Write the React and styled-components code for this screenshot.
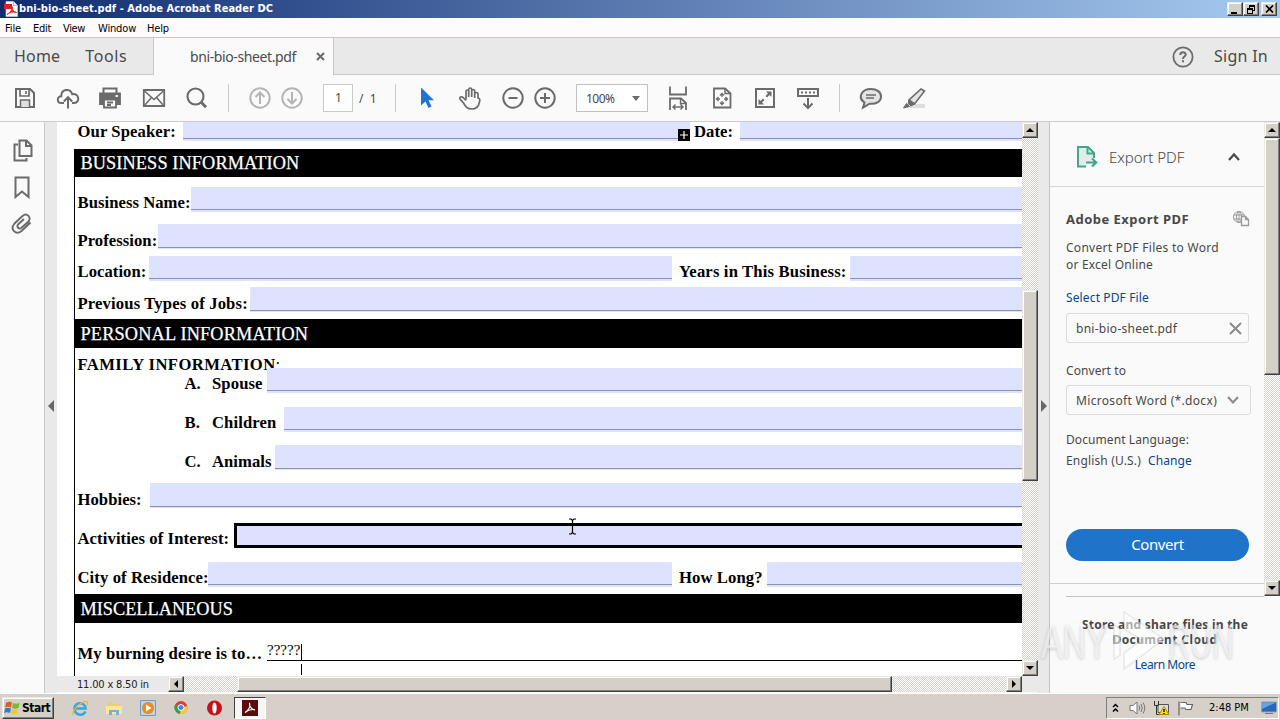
import React from 'react';
import styled, { createGlobalStyle, css } from 'styled-components';

const GlobalStyle = createGlobalStyle`
    * {
        box-sizing: border-box;
    }

    body {
        margin: 0;
        overflow: hidden;
        background: #fafafa;
    }

    svg {
        display: block;
        flex: none;
    }
`

const tahoma = css`
    font-family: 'DejaVu Sans Condensed', 'DejaVu Sans', sans-serif;
`

const dither = css`
    background: repeating-conic-gradient(#d4d0c8 0% 25%, #ffffff 0% 50%) 0 0 / 2px 2px;
`

const bevel = css`
    border: 1px solid;
    border-color: #ece9e2 #404040 #404040 #ece9e2;
    box-shadow: inset -1px -1px 0 #808080, inset 1px 1px 0 #ffffff;
    background: #d4d0c8;
`

const Screen = styled.div`
    position: relative;
    display: flex;
    flex-direction: column;
    width: 1280px;
    height: 720px;
    overflow: hidden;
    background: #fafafa;
    font-family: 'Noto Sans', 'Open Sans', sans-serif;
    color: #484848;
    white-space: nowrap;
`

const Text = styled.span`
    font-size: ${p => p.$size || 12}px;
    letter-spacing: ${p => p.$ls || 0}px;
    font-weight: ${p => p.$weight || 400};
    color: ${p => p.$color || 'inherit'};
    line-height: ${p => p.$lh || 17}px;
`

/* ---------- window chrome ---------- */

const TitleBar = styled.div`
    ${tahoma}
    display: flex;
    align-items: center;
    flex: none;
    height: 18px;
    padding: 0 3px 0 4px;
    gap: 1px;
    background: linear-gradient(to right, #0f2b70, #a6caf0);
`

const WindowTitle = styled.span`
    flex: 1;
    font-size: 11px;
    font-weight: bold;
    letter-spacing: 0.05px;
    line-height: 18px;
    color: #ffffff;
`

const WindowButton = styled.span`
    ${bevel}
    display: flex;
    align-items: center;
    justify-content: center;
    width: 16px;
    height: 14px;
    margin-left: ${p => p.$gap || 0}px;
`

const MenuBar = styled.div`
    ${tahoma}
    display: flex;
    flex: none;
    height: 20px;
    padding-left: 5px;
    background: #fdfbfc;
    border-bottom: 1px solid #c9c9c9;
`

const MenuItem = styled.span`
    width: ${p => p.$width}px;
    font-size: 11px;
    letter-spacing: ${p => p.$ls}px;
    line-height: 21px;
    color: #000000;
`

const TabBar = styled.div`
    display: flex;
    flex: none;
    height: 37px;
    color: #4a4a4a;
`

const TabHomes = styled.div`
    display: flex;
    align-items: center;
    width: 154px;
    padding: 1px 0 0 14px;
    gap: 25px;
    background: #e9e9e9;
    border-right: 1px solid #c9c9c9;
    border-bottom: 1px solid #c9c9c9;
`

const ActiveTab = styled.div`
    display: flex;
    align-items: center;
    justify-content: space-between;
    width: 179px;
    padding: 0 8px 0 36px;
    background: #fafafa;
`

const TabRest = styled.div`
    display: flex;
    flex: 1;
    align-items: center;
    justify-content: flex-end;
    gap: 20px;
    padding: 1px 12px 0 0;
    background: #e9e9e9;
    border-left: 1px solid #c9c9c9;
    border-bottom: 1px solid #c9c9c9;
`

const Toolbar = styled.div`
    display: flex;
    align-items: center;
    flex: none;
    height: 47px;
    padding: 0 0 0 13px;
    background: #fafafa;
    border-bottom: 1px solid #cccccc;
`

const Tool = styled.span`
    flex: none;
    width: 24px;
    margin-right: ${p => p.$after}px;
`

const Divider = styled.span`
    width: 1px;
    height: 28px;
    margin-right: ${p => p.$after}px;
    background: #c9c9c9;
`

const PageBox = styled.span`
    width: 30px;
    height: 28px;
    margin-right: 6px;
    padding-left: 11px;
    border: 1px solid #c9c9c9;
    background: #ffffff;
    font-size: 12px;
    line-height: 26px;
`

const PageTotal = styled.span`
    width: 36px;
    font-size: 12px;
    letter-spacing: 1.6px;
`

const ZoomBox = styled.span`
    display: flex;
    align-items: center;
    justify-content: space-between;
    width: 72px;
    height: 28px;
    margin-right: 18px;
    padding: 0 7px 0 9px;
    border: 1px solid #c0c0c0;
    background: #ffffff;
`

/* ---------- document ---------- */

const Body = styled.div`
    display: flex;
    flex: none;
    height: 571px;
`

const Rail = styled.div`
    display: flex;
    flex-direction: column;
    width: 45px;
    padding: 16px 0 0 10px;
    gap: 12.5px;
    border-right: 1px solid #c9c9c9;
`

const Splitter = styled.div`
    display: flex;
    align-items: center;
    justify-content: center;
    width: ${p => p.$width}px;
    background: #e9e9e9;
    padding-bottom: 3px;
`

const Viewer = styled.div`
    display: flex;
    flex-direction: column;
    width: 981px;
`

const Pane = styled.div`
    display: flex;
    height: 554px;
`

const Page = styled.div`
    display: flex;
    flex-direction: column;
    width: 965px;
    padding-left: 17px;
    overflow: hidden;
    background: #ffffff;
    font-family: 'Liberation Serif', serif;
    color: #000000;
`

const Frame = styled.div`
    display: flex;
    flex-direction: column;
    flex: 1;
    margin-top: 8px;
    border-left: 1px solid #000000;
`

const Band = styled.div`
    flex: none;
    height: ${p => p.$height}px;
    margin-top: ${p => p.$top || 0}px;
    padding-left: 5.5px;
    background: #000000;
    color: #ffffff;
    font-size: 18.3px;
    letter-spacing: ${p => p.$ls || 0}px;
    line-height: ${p => (p.$height > 28 ? 31 : 28)}px;
    -webkit-text-stroke: 0.25px #ffffff;
`

const FormRow = styled.div`
    display: flex;
    flex: none;
    height: 25px;
    margin-top: ${p => p.$top}px;
    padding-left: ${p => p.$indent || 2.5}px;
`

const Label = styled.span`
    flex: none;
    width: ${p => p.$width}px;
    font-size: 16.65px;
    font-weight: bold;
    letter-spacing: ${p => p.$ls || 0.05}px;
    line-height: ${p => p.$lh || 31}px;
`

const Colon = styled.span`
    font-weight: normal;
`

const Field = styled.span`
    flex: ${p => (p.$width ? 'none' : 1)};
    width: ${p => (p.$width ? p.$width + 'px' : 'auto')};
    height: 25px;
    margin-right: ${p => p.$after || 0}px;
    background: linear-gradient(#8c91ac, #8c91ac) 0 ${p => p.$line || 22}px / 100% 1px no-repeat #dde3ff;
`

const FocusedField = styled.span`
    flex: 1;
    height: 25px;
    border: 3px solid #000000;
    border-right: 0;
    background: #dde1ff;
`

const TypedField = styled.span`
    position: relative;
    flex: 1;
    height: 25px;
    border-bottom: 1px solid #000000;
    font-size: 15px;
    line-height: 29px;
`

const Caret = styled.span`
    position: absolute;
    left: 34px;
    top: 8px;
    width: 1px;
    height: 31px;
    background: linear-gradient(#000 0 16px, transparent 16px 20px, #000 20px);
`

const MoreBadge = styled.span`
    position: absolute;
    left: 678px;
    top: 129px;
    width: 12px;
    height: 12px;
    display: flex;
    align-items: center;
    justify-content: center;
    background: #000000;
`

const TextCursor = styled.span`
    position: absolute;
    left: 568px;
    top: 518px;
`

const ScrollBar = styled.div`
    ${dither}
    display: flex;
    flex: none;
    flex-direction: ${p => (p.$row ? 'row' : 'column')};
    width: ${p => (p.$row ? '854px' : '16px')};
    height: ${p => p.$height}px;
`

const ScrollButton = styled.span`
    ${bevel}
    display: flex;
    flex: none;
    align-items: center;
    justify-content: center;
    width: 16px;
    height: 16px;
`

const Thumb = styled.span`
    ${bevel}
    flex: none;
    width: ${p => p.$width || 16}px;
    height: ${p => p.$height || 16}px;
    margin: ${p => p.$margin};
`

const Track = styled.span`
    flex: 1;
`

const StatusRow = styled.div`
    display: flex;
    height: 16px;
    background: #e9e9e9;
`

const PageSize = styled.span`
    ${tahoma}
    width: 111px;
    padding-left: 20px;
    font-size: 11px;
    letter-spacing: -0.18px;
    line-height: 18px;
    color: #222222;
`

/* ---------- export panel ---------- */

const Side = styled.div`
    display: flex;
    flex-direction: column;
    width: 231px;
    background: #fafafa;
    border-left: 1px solid #c4c4c4;
`

const SideTop = styled.div`
    display: flex;
    height: 474px;
`

const Panel = styled.div`
    display: flex;
    flex-direction: column;
    flex: 1;
`

const PanelHeader = styled.div`
    display: flex;
    align-items: center;
    flex: none;
    height: 65px;
    padding: 6px 23px 0 25px;
    border-bottom: 1px solid #d5d5d5;
`

const PanelTitle = styled.span`
    flex: 1;
    margin-left: 10px;
    font-size: 15px;
    font-weight: 300;
    letter-spacing: -0.05px;
    color: #484848;
`

const PanelBody = styled.div`
    display: flex;
    flex-direction: column;
    height: 397px;
    padding: 23px 0 0 16px;
    border-bottom: 1px solid #cfcfcf;
`

const HeadingRow = styled.div`
    display: flex;
    align-items: center;
    justify-content: space-between;
    height: 18px;
    margin-bottom: 11px;
    padding-right: 14px;
`

const PanelLink = styled.a`
    margin-top: 16px;
    font-size: 12px;
    letter-spacing: 0.13px;
    line-height: 17px;
    color: #05478f;
`

const Box = styled.div`
    display: flex;
    align-items: center;
    justify-content: space-between;
    flex: none;
    width: ${p => p.$width}px;
    height: 30px;
    margin: ${p => p.$margin};
    padding: 0 ${p => p.$right}px 0 9px;
    border: 1px solid #dcdcdc;
    border-radius: 3px;
`

const LanguageRow = styled.div`
    display: flex;
    gap: 7px;
    margin-top: 4px;
`

const ConvertButton = styled.div`
    width: 183px;
    height: 32px;
    margin-top: 60px;
    border-radius: 16px;
    background: #1f74ca;
    color: #ffffff;
    text-align: center;
    font-size: 15px;
    letter-spacing: -0.4px;
    line-height: 31px;
`

const CloudNote = styled.div`
    display: flex;
    flex-direction: column;
    align-items: center;
    width: 198px;
    margin-left: 16px;
    padding: 20px 0 0;
    border-top: 1px solid #c4c4c4;
`

const LearnMore = styled.a`
    margin-top: 9px;
    font-size: 12px;
    letter-spacing: -0.45px;
    line-height: 17px;
    color: #05478f;
`

/* ---------- taskbar ---------- */

const Taskbar = styled.div`
    ${tahoma}
    display: flex;
    flex: none;
    align-items: center;
    height: 27px;
    padding: 1px 1px 0 2px;
    background: #d6d0c8;
    border-top: 1px solid #ffffff;
`

const StartButton = styled.span`
    ${bevel}
    display: flex;
    align-items: center;
    width: 52px;
    height: 22px;
    margin-right: 17px;
    padding-left: 1px;
    gap: 1px;
    font-size: 12px;
    font-weight: bold;
    letter-spacing: -0.5px;
    color: #000000;
`

const Launch = styled.span`
    width: 18px;
    margin-right: ${p => p.$after}px;
`

const RunningApp = styled.span`
    display: flex;
    align-items: center;
    justify-content: center;
    width: 32px;
    height: 22px;
    border: 1px solid;
    border-color: #404040 #ffffff #ffffff #404040;
    background: #f8f6f4;
`

const Tray = styled.span`
    display: flex;
    align-items: center;
    width: 173px;
    height: 22px;
    margin-left: auto;
    padding-left: 5px;
    border: 1px solid;
    border-color: #808080 #ffffff #ffffff #808080;
`

const TrayItem = styled.span`
    margin-right: ${p => p.$after}px;
`

const Clock = styled.span`
    width: 52px;
    font-size: 11px;
    color: #000000;
`

const Watermark = styled.div`
    position: absolute;
    left: 1041px;
    top: 607px;
    display: flex;
    align-items: center;
    width: 196px;
    height: 68px;
    font: 49px/68px 'Liberation Sans', sans-serif;
    color: rgba(255, 255, 255, 0.6);
    text-shadow: 0 1px 4px rgba(0, 0, 0, 0.2);
`

const MarkWord = styled.span`
    flex: none;
    width: ${p => p.$width}px;
    transform: scaleX(${p => p.$squeeze});
    transform-origin: 0 50%;
`

const stroke = { fill: 'none', stroke: '#6b6b6b', strokeWidth: 1.8 }

function Icon({ size = 24, children, ...rest }) {
    return <svg width={size} height={size} viewBox={`0 0 ${size} ${size}`} {...stroke} {...rest}>{children}</svg>
}

function Arrow({ dir, size = 4, color = '#000' }) {
    const turn = { up: 0, right: 90, down: 180, left: 270 }[dir]
    return (
        <svg width={size * 2} height={size * 2} viewBox="0 0 8 8">
            <path d="M0 6L4 2L8 6Z" fill={color} transform={`rotate(${turn} 4 4)`} />
        </svg>
    )
}

function Chrome() {
    return (
        <>
            <TitleBar>
                <svg width="14" height="16" viewBox="0 0 14 16">
                    <path d="M2 .5H9.5L13.500 4.500V15.500H2Z" fill="#fff" stroke="#ccc" strokeWidth=".7" />
                    <path d="M9.500 .5V4.500H13.500" fill="#eee" stroke="#999" strokeWidth=".6" />
                    <path d="M-2 3H8V8H-2Z" fill="#d8241c" />
                    <path d="M3 13.500C7 11 8.500 8 8 5.500C8 9 10 11 12.500 11.500C9 10.500 6 11 3 13.500Z" fill="#e33" stroke="#d8241c" />
                </svg>
                <WindowTitle>bni-bio-sheet.pdf - Adobe Acrobat Reader DC</WindowTitle>
                <WindowButton>
                    <svg width="10" height="9" viewBox="0 0 10 9"><path d="M1 7H7V9H1Z" fill="#000" /></svg>
                </WindowButton>
                <WindowButton $gap={-1}>
                    <svg width="10" height="9" viewBox="0 0 10 9" fill="none" stroke="#000" shapeRendering="crispEdges">
                        <path d="M3.5 3V.5H8.5V5.5H7M3 1.5H9M1.5 3.5H6.5V8.5H1.5ZM1 4.5H7" />
                    </svg>
                </WindowButton>
                <WindowButton $gap={1}>
                    <svg width="9" height="8" viewBox="0 0 9 8"><path d="M1 .5L8 7.5M8 .5L1 7.5" stroke="#000" strokeWidth="1.7" /></svg>
                </WindowButton>
            </TitleBar>
            <MenuBar>
                <MenuItem $width={28} $ls={-0.1}>File</MenuItem>
                <MenuItem $width={30} $ls={-0.25}>Edit</MenuItem>
                <MenuItem $width={35} $ls={-0.35}>View</MenuItem>
                <MenuItem $width={49} $ls={-0.15}>Window</MenuItem>
                <MenuItem $width={40} $ls={-0.2}>Help</MenuItem>
            </MenuBar>
            <TabBar>
                <TabHomes>
                    <Text $size={16} $ls={0.2}>Home</Text>
                    <Text $size={16} $ls={0.6}>Tools</Text>
                </TabHomes>
                <ActiveTab>
                    <Text $size={14} $ls={-0.39}>bni-bio-sheet.pdf</Text>
                    <svg width="9" height="9" viewBox="0 0 9 9"><path d="M1 1L8 8M8 1L1 8" stroke="#6b6b6b" strokeWidth="2" /></svg>
                </ActiveTab>
                <TabRest>
                    <Icon size={22}>
                        <circle cx="11" cy="11" r="9.6" />
                        <path d="M8.3 9C8.3 5.4 13.8 5.5 13.7 8.7C13.6 10.6 11 10.6 11 13M11 14.3V16.2" strokeWidth="2" />
                    </Icon>
                    <Text $size={16} $ls={0.27}>Sign In</Text>
                </TabRest>
            </TabBar>
        </>
    )
}

function Tools() {
    return (
        <Toolbar>
            <Tool $after={19}>
                <Icon strokeWidth="2">
                    <path d="M3 3H17L21 7V21H3Z" />
                    <path d="M7 3V10H16V3M13 5V8" strokeWidth="1.700" />
                    <path d="M7.5 21V14H16.5V21" fill="#e0e0e0" strokeWidth="1.500" />
                </Icon>
            </Tool>
            <Tool $after={18}>
                <Icon strokeWidth="2">
                    <path d="M8 17H5.5C.6 17 .6 10.3 5.3 10.3C5 3.2 14.5 1.5 16.2 8.2C23.8 7 24 17 18.3 17H16" />
                    <path d="M12 22.5V11.5M7.8 15.5L12 11.2L16.2 15.5" />
                </Icon>
            </Tool>
            <Tool $after={20}>
                <Icon>
                    <path d="M5.5 7V2.5H18.500V7" strokeWidth="2" />
                    <path d="M2 7.500H22V18H19V14H5V18H2Z" fill="#6b6b6b" />
                    <path d="M6 13.500H18V21.500H6ZM9 16.500H15M9 19H13" fill="#fafafa" />
                    <path d="M17.500 10H20" stroke="#fff" />
                </Icon>
            </Tool>
            <Tool $after={19}>
                <Icon>
                    <path d="M1.800 4H22.200V20H1.800Z" />
                    <path d="M2.500 5L12 13.500L21.500 5M2.500 19.500L9.500 11.500M21.500 19.500L14.500 11.500" strokeWidth="1.500" />
                </Icon>
            </Tool>
            <Tool $after={19}>
                <Icon>
                    <circle cx="10.500" cy="10.500" r="8" strokeWidth="2.100" />
                    <path d="M16.500 16.500L21 21.300" strokeWidth="2.800" />
                </Icon>
            </Tool>
            <Divider $after={19} />
            <Tool $after={8}>
                <Icon stroke="#b4b4b4" strokeWidth="2">
                    <circle cx="12" cy="12" r="9.700" />
                    <path d="M12 18V7M7.500 11L12 6.500L16.500 11" />
                </Icon>
            </Tool>
            <Tool $after={19}>
                <Icon stroke="#b4b4b4" strokeWidth="2">
                    <circle cx="12" cy="12" r="9.700" />
                    <path d="M12 6V17M7.500 13L12 17.500L16.500 13" />
                </Icon>
            </Tool>
            <PageBox>1</PageBox>
            <PageTotal>/ 1</PageTotal>
            <Divider $after={19} />
            <Tool $after={19}>
                <Icon><path d="M6 1.500L19 14.300H13.500L16.500 20.500L13.500 22L10.500 15.500L6 19.500Z" fill="#1f74d2" stroke="none" /></Icon>
            </Tool>
            <Tool $after={19}>
                <Icon strokeWidth="1.700">
                    <path d="M8 13.500V5.500C8 3.500 10.700 3.500 10.700 5.500V11V3.500C10.700 1.500 13.700 1.500 13.700 3.500V11V5C13.700 3 16.700 3 16.700 5V12V8C16.900 6 20 6 20 8V12C22 12 22 14 21.500 16C20.500 21 18.500 23 14 23C9 23 7.500 20.500 5.500 17L2 13C1 10.800 3.500 10.300 5 11.500L8 14.500" />
                </Icon>
            </Tool>
            <Tool $after={8}>
                <Icon strokeWidth="2"><circle cx="12" cy="12" r="9.700" /><path d="M7.500 12H16.500" /></Icon>
            </Tool>
            <Tool $after={19}>
                <Icon strokeWidth="2"><circle cx="12" cy="12" r="9.700" /><path d="M7 12H17M12 7V17" /></Icon>
            </Tool>
            <ZoomBox>
                <Text $size={12} $ls={-0.55}>100%</Text>
                <svg width="8" height="5" viewBox="0 0 8 5"><path d="M0 0H8L4 5Z" fill="#6b6b6b" /></svg>
            </ZoomBox>
            <Tool $after={20}>
                <Icon>
                    <path d="M4 .5V8.500H20V.500M4 24V12.500H15L20 17V24" />
                    <path d="M14.500 12.500V17.500H20M7 21H17M9.500 18.500L7 21L9.500 23.500M14.500 18.500L17 21L14.500 23.500" strokeWidth="1.400" />
                </Icon>
            </Tool>
            <Tool $after={19}>
                <Icon>
                    <path d="M4 2.500H15L20.500 7.500V21.500H4Z" />
                    <path d="M15 3V7.500H20" strokeWidth="1.500" />
                    <path d="M12 8V11M12 15V18M6.500 13H10M14 13H17.500M10 9.500L12 7.500L14 9.500M10 16.500L12 18.500L14 16.500M8.500 11L6.500 13L8.500 15M15.500 11L17.500 13L15.500 15" strokeWidth="1.300" />
                </Icon>
            </Tool>
            <Tool $after={19}>
                <Icon>
                    <path d="M3 3H21V21H3Z" strokeWidth="2" />
                    <path d="M13 5.500H18.500V11L16.500 9L14 11.500L12.500 10L15 7.500ZM5.500 13V18.500H11L9 16.500L11.500 14L10 12.500L7.500 15Z" fill="#6b6b6b" stroke="none" />
                </Icon>
            </Tool>
            <Tool $after={19}>
                <Icon>
                    <path d="M2 3H22V10H2Z" strokeWidth="2" />
                    <path d="M5 6.500H20" strokeDasharray="2 2" />
                    <path d="M12 12V21.500M7.500 17.500L12 22L16.500 17.500" strokeWidth="2" />
                </Icon>
            </Tool>
            <Divider $after={19} />
            <Tool $after={19}>
                <Icon strokeWidth="2">
                    <path d="M12 3C18 3 22 6.200 22 10.500C22 16 16.500 18.500 10.500 17.700L4 21.500L5.500 16.500C-1.500 12 2 3 12 3Z" fill="#e4e4e4" />
                    <path d="M7 9H17M7 12H15" strokeWidth="1.500" />
                </Icon>
            </Tool>
            <Tool $after={0}>
                <Icon>
                    <path d="M10 18H23V22H7Z" fill="#dedede" stroke="none" />
                    <path d="M19 3L22.500 5L12.500 18L7 14Z" fill="#e4e4e4" strokeWidth="1.600" />
                    <path d="M7 14L12.500 18L9 20L6 17.500ZM4.500 17.500L7.500 20.500L1.500 22Z" fill="#6b6b6b" strokeWidth="1" />
                </Icon>
            </Tool>
        </Toolbar>
    )
}

function Form() {
    return (
        <Page>
            <FormRow $top={-6} $indent={3.5}>
                <Label $width={105.5} $ls={0.1}>Our Speaker:</Label>
                <Field $width={507} $after={4} />
                <Label $width={46}>Date:</Label>
                <Field />
            </FormRow>
            <Frame>
                <Band $height={28} $ls={0.1}>BUSINESS INFORMATION</Band>
                <FormRow $top={10}>
                    <Label $width={113.5}>Business Name:</Label>
                    <Field />
                </FormRow>
                <FormRow $top={12}>
                    <Label $width={80.5} $lh={33}>Profession:</Label>
                    <Field $line={23} />
                </FormRow>
                <FormRow $top={7}>
                    <Label $width={71.5} $lh={32}>Location:</Label>
                    <Field $width={523} $after={7} />
                    <Label $width={171} $lh={32} $ls={0.16}>Years in This Business:</Label>
                    <Field />
                </FormRow>
                <FormRow $top={6}>
                    <Label $width={172.5} $lh={33} $ls={0.15}>Previous Types of Jobs:</Label>
                    <Field $line={23} />
                </FormRow>
                <Band $height={29} $top={7} $ls={0.17}>PERSONAL INFORMATION</Band>
                <FormRow $top={6}>
                    <Label $width={205} $lh={21} $ls={0.4}>FAMILY INFORMATION<Colon>:</Colon></Label>
                </FormRow>
                <FormRow $top={-11} $indent={109.5}>
                    <Label $width={27.5}>A.</Label>
                    <Label $width={55} $ls={0.1}>Spouse</Label>
                    <Field />
                </FormRow>
                <FormRow $top={14} $indent={109.5}>
                    <Label $width={27.5}>B.</Label>
                    <Label $width={72} $ls={0.1}>Children</Label>
                    <Field />
                </FormRow>
                <FormRow $top={13} $indent={109.5}>
                    <Label $width={27.5} $lh={33}>C.</Label>
                    <Label $width={63} $lh={33}>Animals</Label>
                    <Field $line={23} />
                </FormRow>
                <FormRow $top={13}>
                    <Label $width={72.5} $lh={33}>Hobbies:</Label>
                    <Field $line={23} />
                </FormRow>
                <FormRow $top={15}>
                    <Label $width={156.5} $ls={0.1}>Activities of Interest:</Label>
                    <FocusedField />
                </FormRow>
                <FormRow $top={14}>
                    <Label $width={130.5} $ls={0.1}>City of Residence:</Label>
                    <Field $width={464} $after={7} />
                    <Label $width={88} $ls={0.1}>How Long?</Label>
                    <Field />
                </FormRow>
                <Band $height={29} $top={7}>MISCELLANEOUS</Band>
                <FormRow $top={13}>
                    <Label $width={189.5} $lh={35} $ls={0.12}>My burning desire is to…</Label>
                    <TypedField>?????<Caret /></TypedField>
                </FormRow>
            </Frame>
        </Page>
    )
}

function ExportPanel() {
    return (
        <Side>
            <SideTop>
                <Panel>
                    <PanelHeader>
                        <Icon stroke="#3fa88a" strokeWidth="2">
                            <path d="M11 21.500H3V2H13L19 8V13" fill="#e3ece9" />
                            <path d="M12.500 2V8.500H19" />
                            <path d="M11 17.500H20M17 13.500L21.200 17.500L17 21.500" strokeWidth="2.200" />
                        </Icon>
                        <PanelTitle>Export PDF</PanelTitle>
                        <svg width="14" height="10" viewBox="0 0 14 10"><path d="M2 8L7 2.500L12 8" fill="none" stroke="#4a4a4a" strokeWidth="2.200" /></svg>
                    </PanelHeader>
                    <PanelBody>
                        <HeadingRow>
                            <Text $size={13} $weight="bold" $ls={0.48}>Adobe Export PDF</Text>
                            <Icon size={18} stroke="#9a9a9a" strokeWidth="1">
                                <circle cx="7" cy="7" r="5.500" />
                                <ellipse cx="7" cy="7" rx="2.500" ry="5.500" />
                                <path d="M1.500 5H12.500M1.500 9H12.500M7 1.500V12.500" />
                                <path d="M9.500 6.500H13.500L16.500 9.500V15.500H9.500ZM13.500 6.500V9.500H16.500" fill="#fafafa" strokeWidth="1.300" />
                            </Icon>
                        </HeadingRow>
                        <Text $ls={0.28}>Convert PDF Files to Word</Text>
                        <Text $ls={0.2}>or Excel Online</Text>
                        <PanelLink>Select PDF File</PanelLink>
                        <Box $width={183} $right={6} $margin="7px 0 19px">
                            <Text $ls={0.27}>bni-bio-sheet.pdf</Text>
                            <svg width="13" height="13" viewBox="0 0 13 13"><path d="M1 1L12 12M12 1L1 12" stroke="#8a8a8a" strokeWidth="2" /></svg>
                        </Box>
                        <Text $ls={0.09}>Convert to</Text>
                        <Box $width={185} $right={11} $margin="6px 0 16px">
                            <Text $ls={0.33} $lh={19}>Microsoft Word (*.docx)</Text>
                            <svg width="12" height="8" viewBox="0 0 12 8"><path d="M1 1L6 6.500L11 1" fill="none" stroke="#8a8a8a" strokeWidth="2" /></svg>
                        </Box>
                        <Text $ls={0.09}>Document Language:</Text>
                        <LanguageRow>
                            <Text $ls={0.16}>English (U.S.)</Text>
                            <Text $ls={0.12} $color="#05478f">Change</Text>
                        </LanguageRow>
                        <ConvertButton>Convert</ConvertButton>
                    </PanelBody>
                </Panel>
                <ScrollBar $height={474}>
                    <ScrollButton><Arrow dir="up" /></ScrollButton>
                    <Thumb $height={237} $margin="0" />
                    <Track />
                    <ScrollButton><Arrow dir="down" /></ScrollButton>
                </ScrollBar>
            </SideTop>
            <CloudNote>
                <Text $weight="bold" $ls={0.23} $lh={15}>Store and share files in the</Text>
                <Text $weight="bold" $ls={0.4} $lh={15}>Document Cloud</Text>
                <LearnMore>Learn More</LearnMore>
            </CloudNote>
        </Side>
    )
}

function DesktopBar() {
    return (
        <Taskbar>
            <StartButton>
                <svg width="17" height="16" viewBox="0 0 17 16">
                    <path d="M2 3Q5 1 8 2.500L7 7.500Q4 6 1 7.500Z" fill="#e8572a" />
                    <path d="M9 3Q12 4.500 15.500 3L14.500 8Q11 9.500 8 8Z" fill="#7cb82f" />
                    <path d="M1 8.500Q4 7 7 8.500L6 13Q3 11.500 .2 13Z" fill="#2f7fd0" />
                    <path d="M8 9Q11 10.500 14 9L13 13.500Q10 15 7 13.500Z" fill="#f5c52c" />
                </svg>
                Start
            </StartButton>
            <Launch $after={16}>
                <svg width="18" height="18" viewBox="0 0 18 18" fill="none">
                    <path d="M14.500 12.500C11.500 18 3.500 16 3.500 9.500C3.500 3 13.500 2 14.500 9.500H5" stroke="#39a5e0" strokeWidth="2.600" />
                    <path d="M2.500 16C-1 13 11 1 16 2.500C17.500 3 16 6 15.500 6.500" stroke="#e8b832" strokeWidth="1.200" />
                </svg>
            </Launch>
            <Launch $after={16}>
                <svg width="18" height="18" viewBox="0 0 18 18">
                    <path d="M2 3H7L8 5H16V15H2Z" fill="#e9cf72" />
                    <path d="M1 7H17V15H1Z" fill="#f7e7a0" />
                    <path d="M4 16V11H14V16H11V13H7V16Z" fill="#6db4e3" />
                </svg>
            </Launch>
            <Launch $after={16}>
                <svg width="18" height="18" viewBox="0 0 18 18">
                    <path d="M1.500 1.500H16.500V16.500H1.500Z" fill="#b9d5ea" stroke="#6a9fc5" />
                    <circle cx="9" cy="9" r="6" fill="#f08a1d" />
                    <path d="M7 5.500L12.500 9L7 12.500Z" fill="#fff" />
                </svg>
            </Launch>
            <Launch $after={15}>
                <svg width="18" height="18" viewBox="0 0 18 18">
                    <circle cx="8" cy="8.500" r="6.500" fill="#e33b2e" />
                    <path d="M8 8.500L2.400 5.200A6.500 6.500 0 0 0 7 15Z" fill="#2ba24c" />
                    <path d="M8 8.500L14.400 7A6.500 6.500 0 0 1 7 15Z" fill="#f9cc2d" />
                    <circle cx="8" cy="8.500" r="3" fill="#4285e8" stroke="#fff" />
                </svg>
            </Launch>
            <Launch $after={10}>
                <svg width="18" height="18" viewBox="0 0 18 18">
                    <circle cx="8.500" cy="9" r="7.500" fill="#c8101c" />
                    <ellipse cx="8.500" cy="9" rx="2.200" ry="5.500" fill="#fff" />
                </svg>
            </Launch>
            <RunningApp>
                <svg width="16" height="16" viewBox="0 0 16 16">
                    <path d="M0 0H16V16H0Z" fill="#5c0a0c" />
                    <path d="M3 12.500C8 9 8.500 6 7.500 3C7.500 7 10 10 13 9.800C9.500 9 6 10 3 12.500Z" fill="none" stroke="#fff" strokeWidth="1.200" />
                </svg>
            </RunningApp>
            <Tray>
                <TrayItem $after={10}>
                    <svg width="7" height="10" viewBox="0 0 7 10"><path d="M1 4L3.500 1.500L6 4M1 8.500L3.500 6L6 8.500" fill="none" stroke="#000" strokeWidth="1.500" /></svg>
                </TrayItem>
                <TrayItem $after={7}>
                    <svg width="17" height="14" viewBox="0 0 17 14" fill="none" stroke="#777">
                        <path d="M1 4.500H4L8 1V13L4 9.500H1Z" fill="#fff" />
                        <path d="M10 4.500Q11.500 7 10 9.500M12 3Q14.500 7 12 11M14 1.500Q17.500 7 14 12.500" />
                    </svg>
                </TrayItem>
                <TrayItem $after={7}>
                    <svg width="17" height="16" viewBox="0 0 17 16" fill="none" stroke="#555">
                        <path d="M5 4.500H15.500V12.500H5Z" fill="#ddd" />
                        <path d="M1.500 1V5.500H5.500V1M3.500 5.500V14.500H7" stroke="#333" />
                        <path d="M11 6.500L16 14.500H6Z" fill="#ffd51f" stroke="#a98a00" />
                        <path d="M11 9V12M11 13V14" stroke="#000" strokeWidth="1.300" />
                    </svg>
                </TrayItem>
                <TrayItem $after={15}>
                    <svg width="17" height="16" viewBox="0 0 17 16">
                        <path d="M2 1.500V15.500M3.500 2.500H9L10 4.500H15.500L14 9.500H9L8 8H3.500" fill="#fff" stroke="#666" strokeWidth="1.200" />
                    </svg>
                </TrayItem>
                <Clock>2:48 PM</Clock>
                <svg width="16" height="14" viewBox="0 0 16 14">
                    <path d="M.5 1H15.500V11H.5Z" fill="#2868b8" stroke="#8aa5c0" />
                    <path d="M1 1.500H15L1 8Z" fill="#68a3e2" />
                    <path d="M4 12.500H12" stroke="#777" />
                </svg>
            </Tray>
        </Taskbar>
    )
}

export default function App() {
    return (
        <Screen>
            <GlobalStyle />
            <Chrome />
            <Tools />
            <Body>
                <Rail>
                    <Icon size={24} strokeWidth="2">
                        <path d="M9.500 2.500H16.500L21.500 7.500V18H9.500ZM16 3V8H21.500" />
                        <path d="M8 6.500H4.500V22.500H16.500V20" />
                    </Icon>
                    <Icon size={24} strokeWidth="2"><path d="M5.500 2.500H18.500V22L12 16.500L5.500 22Z" /></Icon>
                    <Icon size={24} strokeWidth="1.900">
                        <path d="M20.500 11.500L11.500 20C6 24.500 -.5 18.500 4.500 12.500L12.500 5C17 1 22 6.500 18 11L11.500 16.800C8.500 19 6 15.500 8.500 13L14 8" />
                    </Icon>
                </Rail>
                <Splitter $width={12}><Arrow dir="left" size={6} color="#666" /></Splitter>
                <Viewer>
                    <Pane>
                        <Form />
                        <ScrollBar $height={554}>
                            <ScrollButton><Arrow dir="up" /></ScrollButton>
                            <Thumb $height={191} $margin="152px 0 0" />
                            <Track />
                            <ScrollButton><Arrow dir="down" /></ScrollButton>
                        </ScrollBar>
                    </Pane>
                    <StatusRow>
                        <PageSize>11.00 x 8.50 in</PageSize>
                        <ScrollBar $row $height={16}>
                            <ScrollButton><Arrow dir="left" /></ScrollButton>
                            <Thumb $width={655} $margin="0 0 0 53px" />
                            <Track />
                            <ScrollButton><Arrow dir="right" /></ScrollButton>
                        </ScrollBar>
                    </StatusRow>
                </Viewer>
                <Splitter $width={11}><Arrow dir="right" size={6} color="#666" /></Splitter>
                <ExportPanel />
            </Body>
            <DesktopBar />
            <MoreBadge>
                <svg width="8" height="8" viewBox="0 0 8 8"><path d="M4 0V8M0 4H8" stroke="#fff" strokeWidth="1.200" /></svg>
            </MoreBadge>
            <TextCursor>
                <svg width="9" height="17" viewBox="0 0 9 17"><path d="M1 1H3L4.500 2.500L6 1H8M4.500 2.500V14.500M1 16H3L4.500 14.500L6 16H8" fill="none" stroke="#000" strokeWidth="1.200" /></svg>
            </TextCursor>
            <Watermark>
                <MarkWord $width={69} $squeeze={0.66}>ANY</MarkWord>
                <svg width="58" height="68" viewBox="0 0 58 68" fill="rgba(255,255,255,.55)" stroke="rgba(130,130,130,.16)" strokeWidth="1.500">
                    <path d="M14 5L54 32L14 62V46L32 33L14 22Z" />
                    <path d="M4 18V52L10 48V22Z" />
                </svg>
                <MarkWord $width={66} $squeeze={0.62}>RUN</MarkWord>
            </Watermark>
        </Screen>
    )
}
